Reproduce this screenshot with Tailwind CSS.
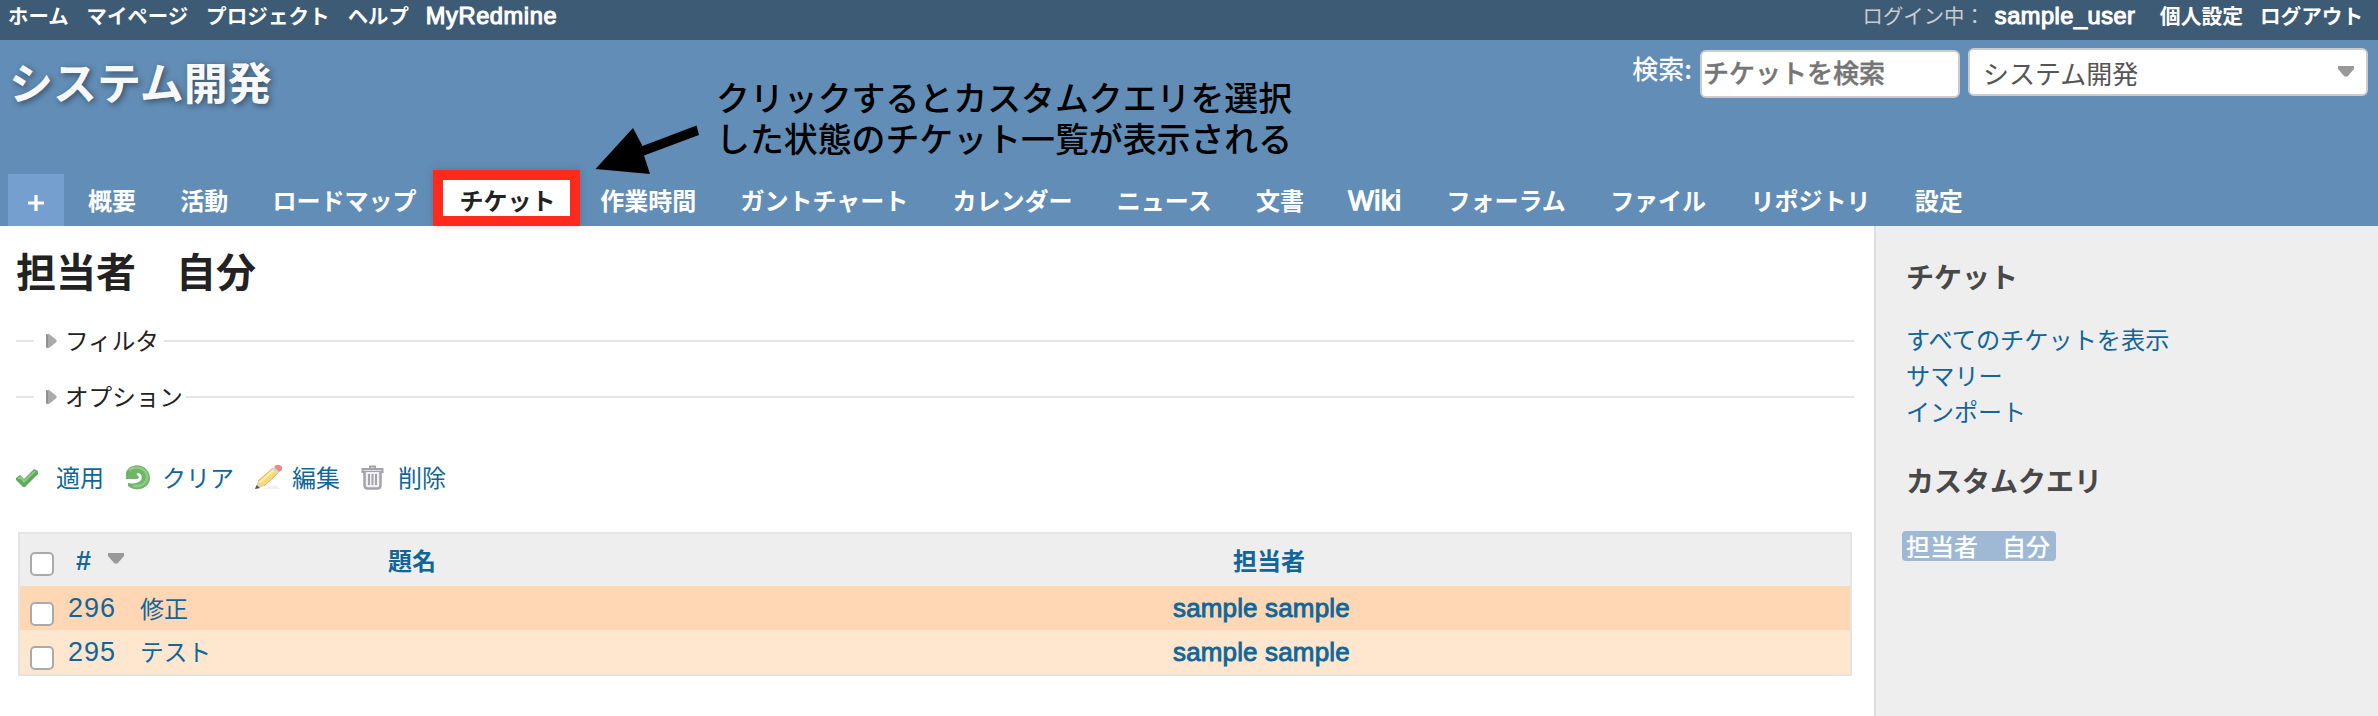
<!DOCTYPE html>
<html lang="ja">
<head>
<meta charset="utf-8">
<title>システム開発 - 担当者 自分</title>
<script src="https://cdn.jsdelivr.net/npm/@tailwindcss/browser@4"></script>
</head>
<body class="w-[2378px] h-[716px] overflow-hidden bg-white font-['Noto_Sans_CJK_JP',sans-serif] text-[24px] leading-[36px] text-[#222] whitespace-nowrap">

<div class="h-[40px] bg-[#3e5b76] flex justify-between pl-[8px] pr-[15px] text-[20.4px] leading-[31px] font-bold text-white">
  <nav class="flex gap-[18px]">
    <a>ホーム</a><a>マイページ</a><a class="text-[20.600px]">プロジェクト</a><a>ヘルプ</a><a class="font-['Liberation_Sans'] font-normal [-webkit-text-stroke:1.1px_#fff] text-[23.600px] leading-[33px] tracking-[0.6px] -ml-[1px]">MyRedmine</a>
  </nav>
  <div class="flex">
    <span class="font-normal text-[#ccc] mr-[10px]">ログイン中：</span>
    <a class="font-['Liberation_Sans'] font-normal [-webkit-text-stroke:1.1px_#fff] text-[23.600px] leading-[33px] tracking-[0.5px] w-[141px]">sample_user</a>
    <a class="ml-[24px] text-[20.800px]">個人設定</a>
    <a class="ml-[17px] text-[20.600px]">ログアウト</a>
  </div>
</div>

<header class="relative h-[186px] bg-[#628db6] flex flex-col justify-between">
  <div class="flex justify-between pl-[9px] pr-[10px] pt-[8px]">
    <h1 class="pt-[7px] text-[44px] leading-[52px] font-bold text-[#f8f8f8] [text-shadow:2px_2px_6px_rgba(0,0,0,0.45)]">システム開発</h1>
    <div class="flex items-start text-[26px]">
      <label class="text-[#f8f8f8] leading-[40px] mr-[8px] font-medium">検索:</label>
      <div class="mt-[2px] w-[260px] h-[48px] border-2 border-[#ccc] rounded-[6px] bg-white pl-[1px] leading-[39px] font-medium text-[#757575] [-webkit-text-stroke:0.4px_#757575]">チケットを検索</div>
      <div class="ml-[8px] w-[400px] h-[48px] border-2 border-[#ccc] rounded-[6px] bg-white pl-[13px] pr-[12px] leading-[45px] text-[#555] flex justify-between">
        <span>システム開発</span>
        <svg class="mt-[16px]" width="16" height="11" viewBox="0 0 16 11"><path d="M0 0H16V3L9.500 10.500H6.500L0 3Z" fill="#999"/></svg>
      </div>
    </div>
  </div>
  <nav class="flex items-end pl-[8px] font-bold text-white text-[24px] leading-[36px]">
    <a class="w-[56px] h-[52px] bg-[#759fcf] mr-[24px] flex justify-center"><svg class="mt-[21px]" width="16" height="16" viewBox="0 0 16 16"><path d="M8 0V16M0 8H16" stroke="#fff" stroke-width="3.200"/></svg></a>
    <div class="flex gap-[44.300px] h-[56px] pt-[12px]">
      <a>概要</a><a>活動</a><a>ロードマップ</a>
      <a class="-mt-[12px] -ml-[28px] -mr-[24px] w-[147px] h-[56px] border-10 border-[#ff2a1c] bg-white text-[#222] text-center pl-[2px] leading-[39px] shadow-[0_0_8px_rgba(0,0,0,0.15)]">チケット</a>
      <a>作業時間</a><a>ガントチャート</a><a>カレンダー</a><a>ニュース</a><a>文書</a><a class="font-['Liberation_Sans'] font-normal [-webkit-text-stroke:1.3px_#fff] text-[27px] leading-[38px] tracking-[0.6px] w-[54px]">Wiki</a><a>フォーラム</a><a>ファイル</a><a>リポジトリ</a><a>設定</a>
    </div>
  </nav>
  <div class="absolute left-[716px] top-[36px] text-[33.900px] leading-[41px] font-medium text-black">クリックするとカスタムクエリを選択<br>した状態のチケット一覧が表示される</div>
  <svg class="absolute left-[594px] top-[80px]" width="110" height="60" viewBox="594 120 110 60"><path d="M595.500 169L633 128L642.500 146L696.500 125.500L699 135L644 155.500L650 174Z" fill="#000"/></svg>
</header>

<div class="flex h-[490px]">
  <main class="w-[1874px] pl-[16px] pr-[20px]">
    <h2 class="pt-[16px] text-[40px] leading-[56px] font-bold">担当者　自分</h2>
    <div class="mt-[25px] flex items-center h-[36px]">
      <i class="w-[18px] h-[2px] bg-[#e4e4e4]"></i>
      <svg class="ml-[12px]" width="11" height="14" viewBox="0 0 11 14"><path d="M0 0H3L10.500 6V8L3 14H0Z" fill="#aaa"/><path d="M1 1V13" stroke="#909090" stroke-width="2"/></svg>
      <span class="ml-[8px] -mt-[2px] text-[23.600px] leading-[36px]">フィルタ</span>
      <i class="ml-[5px] flex-1 h-[2px] bg-[#e4e4e4]"></i>
    </div>
    <div class="mt-[20px] flex items-center h-[36px]">
      <i class="w-[18px] h-[2px] bg-[#e4e4e4]"></i>
      <svg class="ml-[12px]" width="11" height="14" viewBox="0 0 11 14"><path d="M0 0H3L10.500 6V8L3 14H0Z" fill="#aaa"/><path d="M1 1V13" stroke="#909090" stroke-width="2"/></svg>
      <span class="ml-[8px] -mt-[2px] text-[23.600px] leading-[36px]">オプション</span>
      <i class="ml-[3px] flex-1 h-[2px] bg-[#e4e4e4]"></i>
    </div>
    <div class="mt-[44px] flex items-center h-[36px] text-[#116699]">
      <svg class="mt-[2px]" width="23" height="20" viewBox="0 0 23 20"><path d="M0 10L4 7L8 11L18 1L22 3V6L9 19H7L0 12Z" fill="#61a95c"/><path d="M2 10.500L4.500 9.500L8 13.500L19 3" stroke="#8ccb86" stroke-width="2" fill="none"/></svg>
      <span class="ml-[17px]">適用</span>
      <svg class="ml-[21px]" width="26" height="25" viewBox="0 0 26 25"><path d="M3 4C8-1 16-1 21 4C27 10 26 18 20 22C15 25.500 8 25 3 21V18C9 19 14 18 16 15C18 11 16 8 12 8L14 12V14H1V7Z" fill="#70b568"/><path d="M4 5C11 0 20 3 22 10C23 17 18 22 8 21" stroke="#8ccb86" stroke-width="2.500" fill="none"/><path d="M11 8.500L15.500 10.500L16 14L12 16L14 12Z" fill="#fff"/></svg>
      <span class="ml-[11px]">クリア</span>
      <svg class="ml-[21px]" width="27" height="25" viewBox="0 0 27 25"><path d="M6 24L21 20L25 24Z" fill="#f1f1f1"/><path d="M1 24L3 16L18 3L23 8L9 21Z" fill="#f9da78"/><path d="M4 18L19 5" stroke="#fff0ad" stroke-width="2"/><path d="M3 16L18 3M9 21L23 8" stroke="#dfae55" stroke-width="1"/><path d="M3 16L9 21L1 24Z" fill="#e8d3b0"/><path d="M0 24L1.500 20L5 23Z" fill="#555"/><path d="M17 4L20 7L23 9L25 6L20 2Z" fill="#d8d8dc"/><path d="M19 2L21 0H25L27 2V5L24 7Z" fill="#f08a88"/></svg>
      <span class="ml-[10px]">編集</span>
      <svg class="ml-[21px]" width="24" height="25" viewBox="0 0 24 25"><g fill="none" stroke="#a3a3ab"><path d="M9 3V1.500H14V3" stroke-width="2"/><path d="M1.500 7V4H21.500V7Z" stroke-width="2" fill="#ddd"/><path d="M3.500 7V20Q3.500 23.500 6.500 23.500H16.500Q19.500 23.500 19.500 20V7" stroke-width="2.500" fill="#f0f0f3"/><path d="M8 9V20M11.500 9V20M15 9V20" stroke-width="2"/></g></svg>
      <span class="ml-[13px]">削除</span>
    </div>
    <div class="mt-[37px] mx-[2px] w-[1834px] border-2 border-[#e4e4e4] text-[#116699]">
      <div class="h-[52px] bg-[#eee] flex items-start font-bold pl-[10px]">
        <i class="mt-[18px] w-[24px] h-[24px] border-2 border-[#aaa] rounded-[5px] bg-white"></i>
        <span class="ml-[22px] mt-[8px] w-[32px] font-['Liberation_Sans'] text-[27px] leading-[38px]">#</span>
        <svg class="mt-[19px]" width="16" height="11" viewBox="0 0 16 11"><path d="M0 0H16V3L9.500 10.500H6.500L0 3Z" fill="#999"/></svg>
        <span class="ml-[264px] mt-[8px] w-[845px]">題名</span>
        <span class="mt-[8px]">担当者</span>
      </div>
      <div class="h-[44px] bg-[#ffd7b5] flex items-start pl-[10px]">
        <i class="mt-[16px] w-[24px] h-[24px] border-2 border-[#aaa] rounded-[5px] bg-white"></i>
        <span class="ml-[14px] mt-[3px] w-[72px] font-['Liberation_Sans'] text-[27px] tracking-[1px] leading-[38px]">296</span>
        <span class="mt-[4px] w-[1033px]">修正</span>
        <span class="mt-[3px] font-['Liberation_Sans'] [-webkit-text-stroke:0.9px_#116699] text-[26px] tracking-[0.15px] leading-[38px]">sample sample</span>
      </div>
      <div class="h-[44px] bg-[#ffe6cf] flex items-start pl-[10px]">
        <i class="mt-[16px] w-[24px] h-[24px] border-2 border-[#aaa] rounded-[5px] bg-white"></i>
        <span class="ml-[14px] mt-[3px] w-[72px] font-['Liberation_Sans'] text-[27px] tracking-[1px] leading-[38px]">295</span>
        <span class="mt-[3px] w-[1033px] text-[23.700px]">テスト</span>
        <span class="mt-[3px] font-['Liberation_Sans'] [-webkit-text-stroke:0.9px_#116699] text-[26px] tracking-[0.15px] leading-[38px]">sample sample</span>
      </div>
    </div>
  </main>
  <aside class="flex-1 bg-[#eee] border-l-2 border-[#ddd] pl-[30px] text-[#116699]">
    <h3 class="mt-[30px] text-[28px] leading-[40px] font-bold text-[#484848]">チケット</h3>
    <div class="mt-[25px] flex flex-col text-[24.200px] leading-[36px]"><a>すべてのチケットを表示</a><a>サマリー</a><a class="text-[24px]">インポート</a></div>
    <h3 class="mt-[31px] text-[28px] leading-[40px] font-bold text-[#484848]">カスタムクエリ</h3>
    <a class="mt-[31px] -ml-[4px] block w-[154px] h-[30px] rounded-[4px] bg-[#9fb9d5] pl-[4px] leading-[29px] font-medium text-white">担当者　自分</a>
  </aside>
</div>
</body>
</html>
